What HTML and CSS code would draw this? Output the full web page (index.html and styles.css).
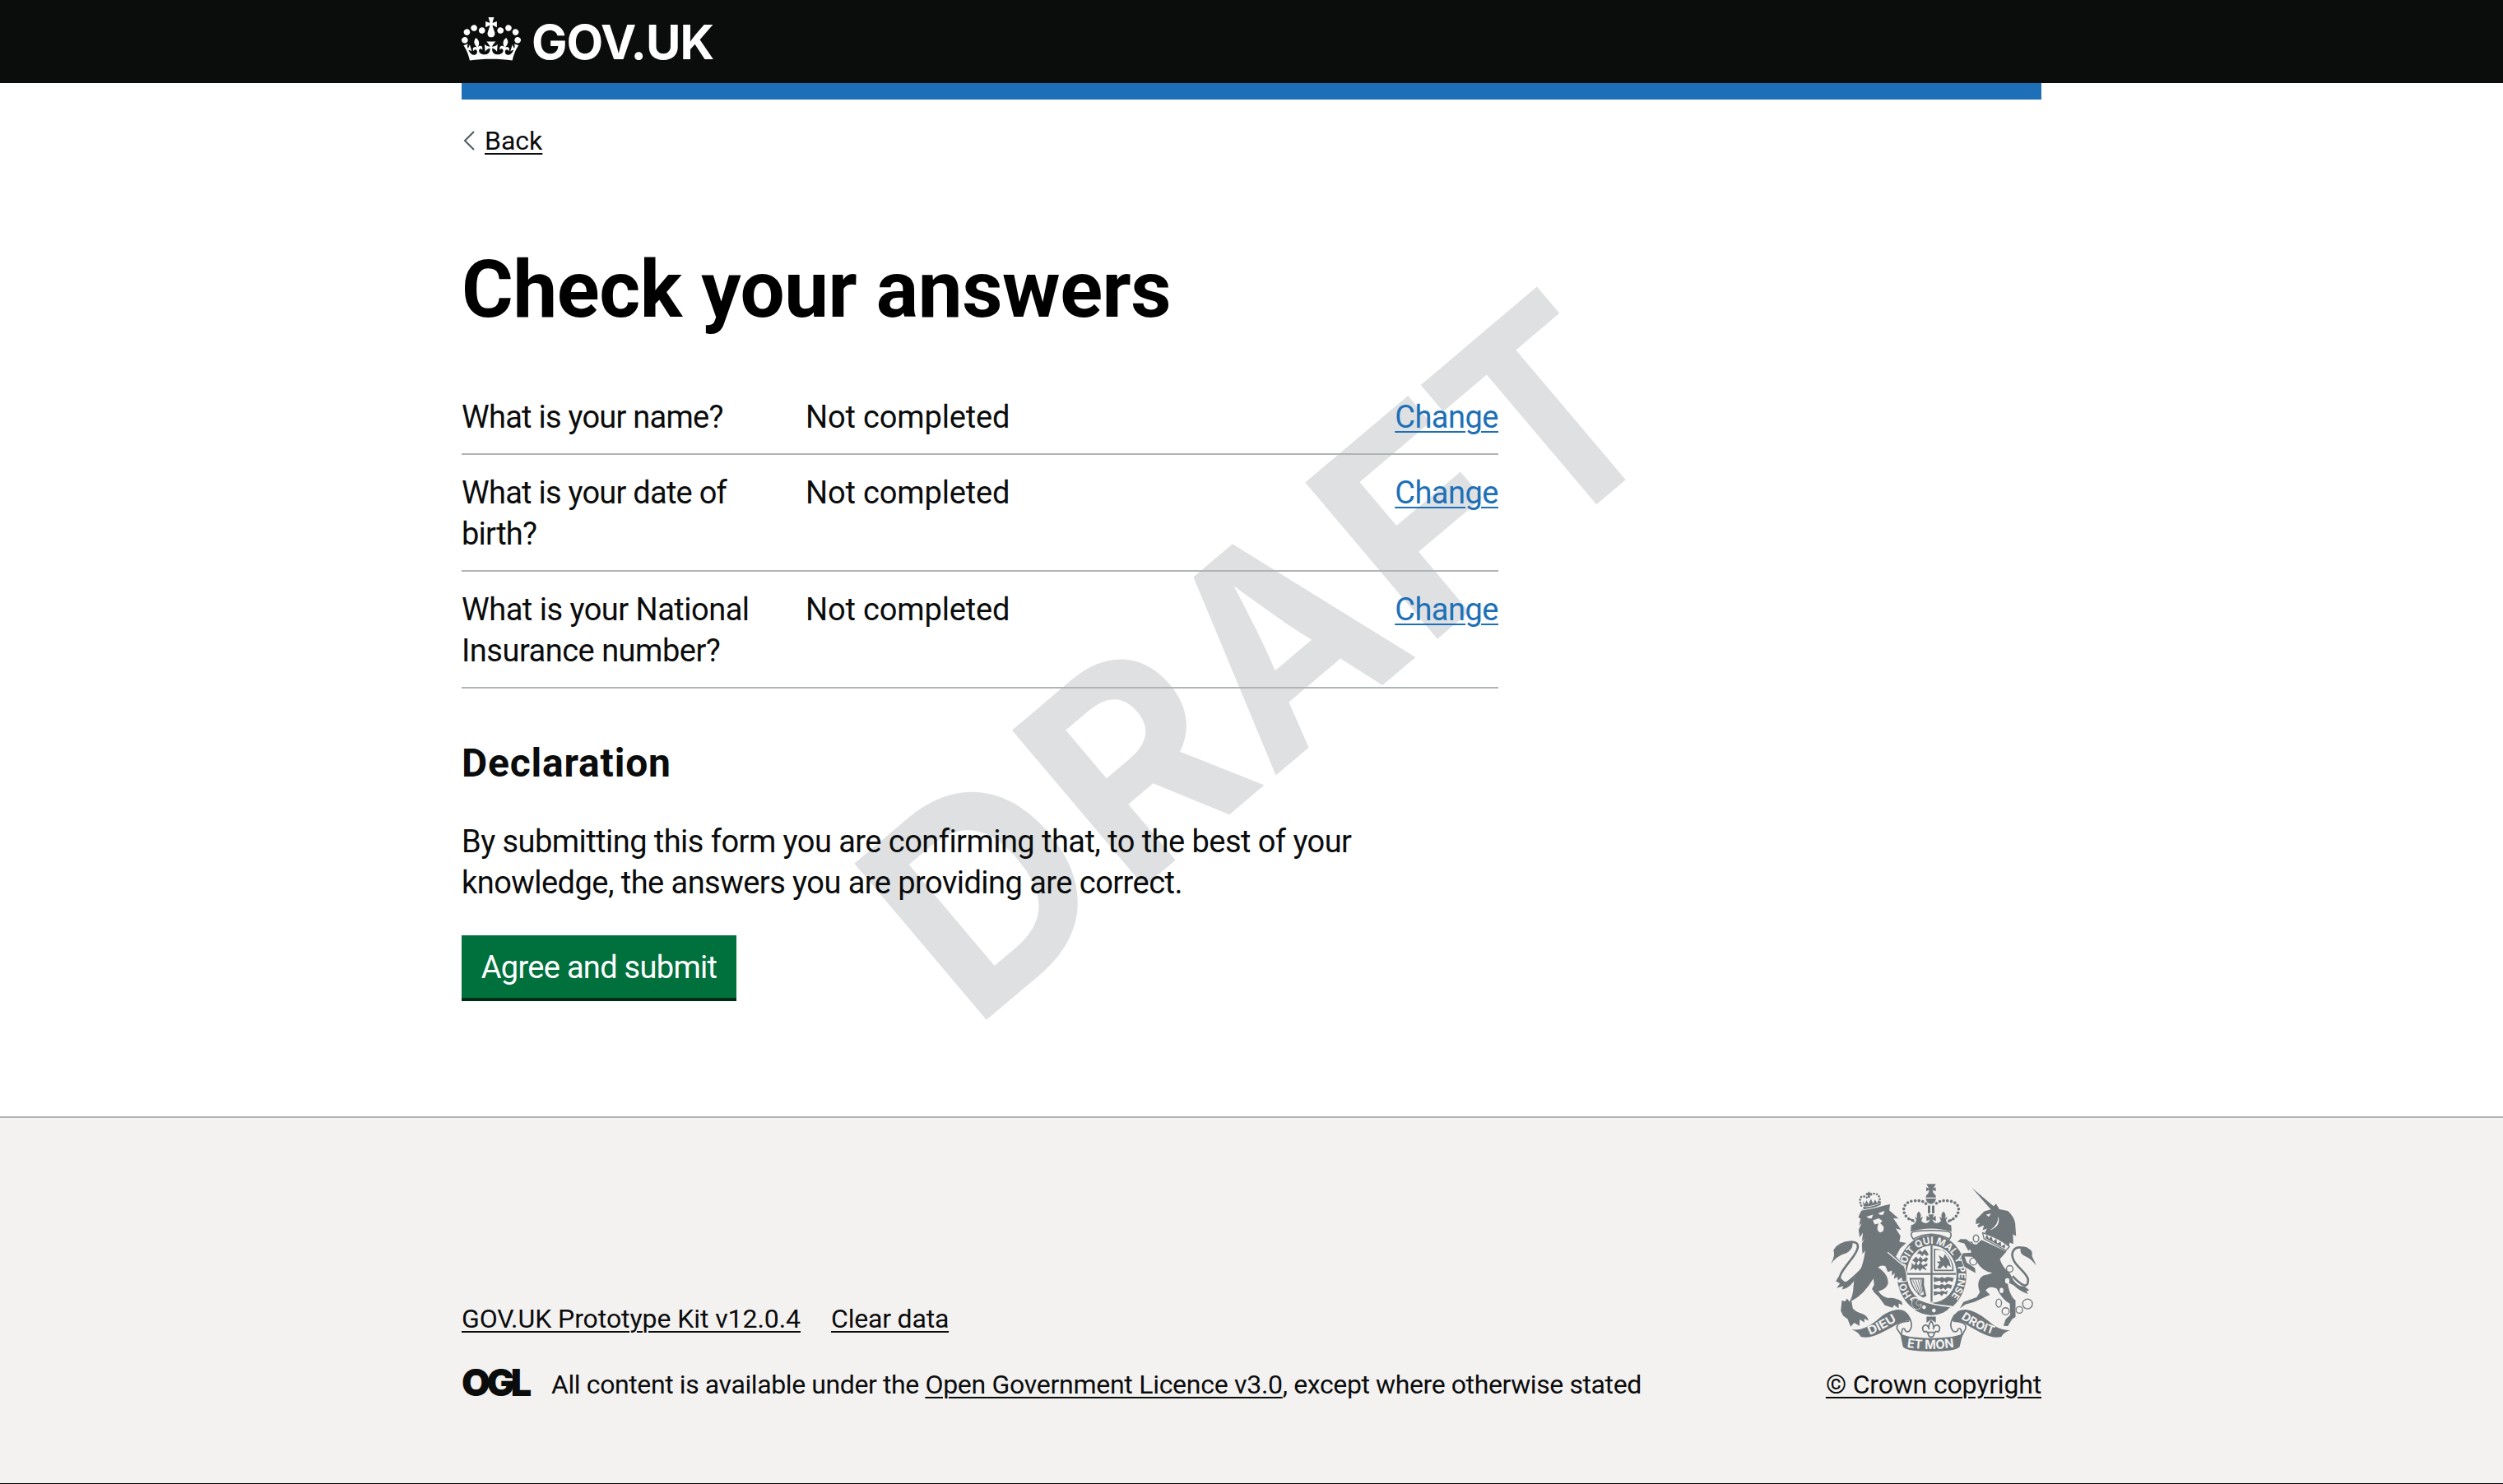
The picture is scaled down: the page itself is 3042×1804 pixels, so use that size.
FILE: index.html
```html
<!DOCTYPE html>
<html lang="en">
<head>
<meta charset="utf-8">
<title>Check your answers - GOV.UK</title>
<link rel="stylesheet" href="styles.css">
</head>
<body>
<header class="header">
  <div class="container header-inner">
    <svg class="crown" viewBox="0 0 132 97" aria-hidden="true"><path fill="currentColor" fill-rule="evenodd" d="M25 30.2c3.5 1.5 7.7-.2 9.1-3.7 1.5-3.6-.2-7.8-3.9-9.2-3.6-1.4-7.6.3-9.1 3.9-1.4 3.5.3 7.5 3.9 9zM9 39.5c3.6 1.5 7.8-.2 9.2-3.7 1.5-3.6-.2-7.8-3.9-9.1-3.6-1.5-7.6.2-9.1 3.8-1.4 3.5.3 7.5 3.8 9zM4.4 57.2c3.5 1.5 7.7-.2 9.1-3.8 1.5-3.6-.2-7.7-3.9-9.1-3.5-1.5-7.6.3-9.1 3.8-1.4 3.5.3 7.6 3.9 9.1zm38.3-21.4c3.5 1.5 7.7-.2 9.1-3.8 1.5-3.6-.2-7.7-3.9-9.1-3.6-1.5-7.6.3-9.1 3.8-1.3 3.6.4 7.7 3.9 9.1zm64.4-5.6c-3.6 1.5-7.8-.2-9.1-3.7-1.5-3.6.2-7.8 3.8-9.2 3.6-1.4 7.7.3 9.2 3.9 1.3 3.5-.4 7.5-3.9 9zm15.9 9.3c-3.6 1.5-7.7-.2-9.1-3.7-1.5-3.6.2-7.8 3.7-9.1 3.6-1.5 7.7.2 9.2 3.8 1.5 3.5-.3 7.5-3.8 9zm4.7 17.7c-3.6 1.5-7.8-.2-9.2-3.8-1.5-3.6.2-7.7 3.9-9.1 3.6-1.5 7.7.3 9.2 3.8 1.3 3.5-.4 7.6-3.9 9.1zM89.3 35.8c-3.6 1.5-7.8-.2-9.2-3.8-1.4-3.6.2-7.7 3.9-9.1 3.6-1.5 7.7.3 9.2 3.8 1.4 3.6-.3 7.7-3.9 9.1zM69.7 17.7l8.9 4.7V9.3l-8.9 2.8c-.2-.3-.5-.6-.9-.9L72.4 0H59.6l3.5 11.2c-.3.3-.6.5-.9.9l-8.8-2.8v13.1l8.8-4.7c.3.3.6.7.9.9l-5 15.4v.1c-.2.8-.4 1.6-.4 2.4 0 4.1 3.1 7.5 7 8.1h.2c.3 0 .7.1 1 .1.4 0 .7 0 1-.1h.2c4-.6 7.1-4.1 7.1-8.1 0-.8-.1-1.7-.4-2.4V34l-5.1-15.4c.4-.2.7-.6 1-.9zM66 92.8c16.9 0 32.8 1.1 47.1 3.2 4-16.9 8.9-26.7 14-33.5l-9.6-3.4c1 4.9 1.1 7.2 0 10.2-1.5-1.4-3-4.3-4.2-8.7L108.6 76c2.8-2 5-3.2 7.5-3.3-4.4 9.4-10 11.9-13.6 11.2-4.3-.8-6.3-4.6-5.6-7.9 1-4.7 5.7-5.9 8-.5 4.3-8.7-3-11.4-7.6-8.8 7.1-7.2 7.9-13.5 2.1-21.1-8 6.1-8.1 12.3-4.5 20.8-4.7-5.4-12.1-2.5-9.5 6.2 3.4-5.2 7.9-2 7.2 3.1-.6 4.3-6.4 7.8-13.5 7.2-10.3-.9-10.9-8-11.2-13.8 2.5-.5 7.1 1.8 11 7.3L80.2 60c-4.1 4.4-8 5.3-12.3 5.4 1.4-4.4 8-11.6 8-11.6H55.5s6.4 7.2 7.9 11.6c-4.2-.1-8-1-12.3-5.4l1.4 16.4c3.9-5.5 8.5-7.7 10.9-7.3-.3 5.8-.9 12.8-11.1 13.8-7.2.6-12.9-2.9-13.5-7.2-.7-5 3.8-8.3 7.1-3.1 2.7-8.7-4.6-11.6-9.4-6.2 3.7-8.5 3.6-14.7-4.6-20.8-5.8 7.6-5 13.9 2.2 21.1-4.7-2.6-11.9.1-7.7 8.8 2.3-5.5 7.1-4.2 8.1.5.7 3.3-1.3 7.1-5.7 7.9-3.5.7-9-1.8-13.5-11.2 2.5.1 4.7 1.3 7.5 3.3l-4.7-15.4c-1.2 4.4-2.7 7.2-4.3 8.7-1.1-3-.9-5.3 0-10.2l-9.5 3.4c5 6.9 9.9 16.7 14 33.5 14.8-2.1 30.8-3.2 47.7-3.2z"/></svg>
    <span class="logotype">GOV.UK</span>
  </div>
</header>

<div class="container page">
  <div class="blue-bar"></div>
  <div class="watermark" aria-hidden="true"><span class="wm-d">D</span><span class="wm-r">R</span><span class="wm-a">A</span><span class="wm-f">F</span><span class="wm-t">T</span></div>

  <a class="back">
    <svg class="chevron" viewBox="0 0 14 24" aria-hidden="true"><path d="M13 1 2 12l11 11" fill="none" stroke="#505a5f" stroke-width="2"/></svg>
    <span class="link back-text">Back</span>
  </a>

  <main class="main">
    <h1 class="title">Check your answers</h1>
    <dl class="summary">
      <div class="row">
        <dt class="key">What is your name?</dt>
        <dd class="value">Not completed</dd>
        <dd class="action"><a class="link change">Change</a></dd>
      </div>
      <div class="row">
        <dt class="key">What is your date of birth?</dt>
        <dd class="value">Not completed</dd>
        <dd class="action"><a class="link change">Change</a></dd>
      </div>
      <div class="row">
        <dt class="key key-wide">What is your National Insurance number?</dt>
        <dd class="value">Not completed</dd>
        <dd class="action"><a class="link change">Change</a></dd>
      </div>
    </dl>
    <h2 class="subtitle">Declaration</h2>
    <p class="statement">By submitting this form you are confirming that, to the best of your knowledge, the answers you are providing are correct.</p>
    <button class="button">Agree and submit</button>
  </main>
</div>

<footer class="footer">
  <div class="container footer-inner">
    <div class="meta">
      <div class="meta-links">
        <a class="link kit">GOV.UK Prototype Kit v12.0.4</a>
        <a class="link clear">Clear data</a>
      </div>
      <div class="licence">
        <span class="ogl">OGL</span>
        <span class="licence-text">All content is available under the <a class="link licence-link">Open Government Licence v3.0</a>, except where otherwise stated</span>
      </div>
    </div>
    <div class="copyright">
      <svg class="arms" viewBox="75 56 750 613" aria-hidden="true">
        <defs>
          <path id="garter" d="M372 467A98 113 0 1 1 507 474"/>
          <path id="dieu" d="M217 609Q272 586 322 552"/>
          <path id="etmon" d="M352 653Q440 667 532 652"/>
          <path id="droit" d="M549 548Q606 588 676 609"/>
        </defs>
        <g fill="#6f777b">
          <!-- garter and shield -->
          <ellipse cx="443" cy="388" rx="127" ry="146"/>
          <ellipse cx="443" cy="386" rx="91" ry="105" fill="#f3f2f1"/>
          <path d="M439 282h7v205h-7zM354 382h178v7H354z"/>
          <path d="M363 374q10-14 6-30l10 10 6-12 8 12 8-11 10 11 16-8v10l-10 3 8 14-17-8-8 10-8-11-8 9-7-9zM372 336l14-14 8 10 8-10 8 11 14-9 6 7-8 11-10-4-8 8-8-9-8 9zM388 312l12-14 8 8 10-11 8 9 6 12-8 4-8-8-8 9-8-9z"/>
          <path d="M451 293v82h72V360q-8-36-38-62zm5 5h26q28 20 36 60v12h-62z" fill-rule="evenodd"/>
          <path d="M463 364l8-15-10-8 15-2-8-22 17 11 6-15 16 23 6 25-12-8-4 13-12-12-10 12z"/>
          <path d="M361 400h54v27l9 39-13 6q-38-19-50-72zm7 6q10 41 36 58l11-4-8-34v-20z" fill-rule="evenodd"/>
          <path d="M374 408l24 53M384 408l19 52M394 408l13 47M403 408l8 45" stroke="#6f777b" stroke-width="3"/>
          <path d="M450 396l20 5 10-5 10 5 10-5 24 4-5 14-14-4-8 9-8-8-8 8-10-9-20 6zM450 423l20 4 10-5 10 5 10-5 18 4-5 14-12-5-8 9-8-8-8 7-8-7-18 6zM450 449l20 2 12-4 10 4 10-5-4 14-10-3-9 9-8-8-20 7z"/>
          <text class="motto" font-size="36"><textPath href="#garter" startOffset="3" textLength="498" lengthAdjust="spacingAndGlyphs">HONI SOIT QUI MAL Y PENSE</textPath></text>
          <path d="M366 478Q384 465 400 480Q445 500 515 505Q490 538 441 539Q400 535 378 518Q394 502 366 478Z" stroke="#f3f2f1" stroke-width="5"/>
          <circle cx="415" cy="507" r="7" fill="#f3f2f1"/><circle cx="451" cy="519" r="7" fill="#f3f2f1"/>
          <path d="M372 482q14-14 24-1-14 4-8 16 10 8 17-3 1 23-20 21-20-10-13-33z" stroke="#f3f2f1" stroke-width="2"/>
          <!-- lion -->
          <path stroke="#f3f2f1" stroke-width="6" paint-order="stroke" d="M175 178L188 150Q230 145 272 134L291 131L288 153L322 183L303 182L331 224L312 220L329 247L325 268L350 272L328 292L312 322L334 345Q353 375 350 411L337 412L333 398L320 409L318 396L305 403L308 382L297 392L298 373L283 378L274 357Q258 352 247 362Q284 385 284 419Q280 440 248 449Q262 468 283 474Q310 470 334 487L336 499L323 493L322 511L306 499L300 509L272 500L250 470L232 452L225 440L233 425L230 402Q195 462 150 484L155 512Q166 524 186 530Q208 536 213 556L197 549L197 562L180 552L179 575L160 564L147 578L136 550L120 538L111 520L115 482L127 486L134 475L143 487Q157 462 157 432Q157 398 185 364Q195 340 200 300L190 312L188 275L198 255L188 268L192 235L180 252L176 224L187 200L178 208L183 184Z"/>
          <path d="M282 306L338 354" stroke="#f3f2f1" stroke-width="4"/>
          <path d="M75 348Q92 316 84 300Q100 267 152 264Q161 292 132 309Q101 316 75 348Z"/>
          <path d="M148 269C190 266 174 303 142 341C113 378 100 397 111 415C130 430 148 405 190 368" fill="none" stroke="#6f777b" stroke-width="8"/>
          <path d="M103 395L93 412L108 420L96 437L120 430L116 442Q145 440 170 395L130 418Z"/>
          <path d="M192 141Q225 142 255 127L258 133Q222 150 195 150ZM203 90h8v-5h6v5h8v7h-8v10h-7v-9h-7zM191 120l8 10 6-14 7 15 9-20 8 17 7-14 7 12 9-12 1 12q-30 14-58 13z"/>
          <path d="M176 176Q230 168 288 150" fill="none" stroke="#f3f2f1" stroke-width="3" transform="translate(4 -22)"/>
          <path d="M186 136C172 103 191 94 210 109C219 87 256 81 254 124" fill="none" stroke="#6f777b" stroke-width="8" stroke-linecap="round" stroke-dasharray="0 11"/>
          <!-- crown -->
          <path d="M424 57h34l-9 16 9-4v14l-12-4 4 14h-20l4-14-11 4V69l10 4zM421 106Q424 89 441 89Q457 89 459 106ZM421 110H459Q455 129 440 130Q425 128 421 110ZM429 136h9v28h-9zM444 136h9v28h-9z"/>
          <path d="M360 183q8 14 21 14l-3-11-12-2zM522 184q-8 14-21 14l3-11 12-2zM368 207Q382 206 387 190L381 176L391 182Q384 170 396 157Q408 170 401 182L411 176L405 192Q418 206 432 196L437 186L424 193V173L435 179L431 168H451L447 179L458 173V193L445 186L450 196Q464 206 477 192L471 176L481 182Q474 170 486 157Q498 170 491 182L501 176L495 190Q500 206 514 207L516 231Q440 209 366 231Z"/>
          <path d="M359 184C333 166 333 125 373 119Q412 114 424 131M522 184C548 166 552 125 508 119Q470 114 457 131" fill="none" stroke="#6f777b" stroke-width="11" stroke-linecap="round" stroke-dasharray="0 14"/>
          <path d="M376 258Q356 232 386 229Q440 224 496 229Q524 232 508 258Q440 222 376 258Z" fill="#f3f2f1" stroke="#6f777b" stroke-width="5"/>
          <!-- unicorn -->
          <path d="M590 71L669 138L678 129L690 149L721 155Q744 175 748 201L751 247L740 241L741 276L728 271L725 284Q695 257 652 247L637 235L645 220L629 226L634 208L614 216L610 209L619 200L604 203L605 187L635 157L659 150Z"/>
          <path stroke="#f3f2f1" stroke-width="5" paint-order="stroke" d="M625 261L716 304L692 331Q700 360 728 383L754 432L720 416Q724 450 740 474L749 482V543L737 550L721 576L705 575L713 551L730 535L728 494Q700 478 680 438Q653 426 640 446L656 462L600 487L566 497L546 511L559 488L607 471L619 452Q602 410 632 391Q653 386 665 381Q628 378 607 340L592 323L563 322L571 344L601 364L603 382L583 371L562 359L550 324L557 310L588 308L583 295L577 301L562 274L537 268L548 258L570 259L587 274L606 278Z"/>
          <path d="M629 235L634 257L714 300L727 286Q690 254 629 235Z" fill="#f3f2f1" stroke="#6f777b" stroke-width="4"/>
          <path d="M638 254L645 242L652 257L661 248L667 266L679 257L682 274L695 268L697 284L711 277L710 293Z"/>
          <path d="M825 354Q804 329 791 324Q760 313 769 288Q785 281 801 296Q813 303 809 320Z"/>
          <path d="M779 291C744 281 727 307 744 339C760 366 788 380 795 405C796 438 777 435 738 393" fill="none" stroke="#6f777b" stroke-width="8"/>
          <path d="M741 409Q762 434 781 430L800 445L789 448L795 459Q760 447 741 425Z"/>
          <g fill="none" stroke="#6f777b" stroke-width="4"><ellipse cx="605" cy="256" rx="10" ry="13"/><ellipse cx="585" cy="280" rx="8" ry="11"/><circle cx="595" cy="340" r="13"/><circle cx="728" cy="367" r="12"/><ellipse cx="688" cy="492" rx="10" ry="15"/><circle cx="713" cy="522" r="13"/><circle cx="763" cy="517" r="12"/><circle cx="793" cy="495" r="18"/></g>
          <g fill="#f3f2f1"><ellipse cx="719" cy="411" rx="8" ry="10"/><ellipse cx="698" cy="446" rx="7" ry="10"/><path d="M205 176l24-7-5 13q-10 4-19-6zM247 164l24-9-5 14q-10 4-19-5zM228 190l22-8 13 10-8 8 12 12q4 20-12 22-12-5-10-20l4-13-14 4zM642 169l18-4-9 12zM656 225q30-15 30-50 12 42-42 54z"/></g>
          <!-- fleur-de-lis -->
          <path d="M424 541h34v23l-17-12-17 12z"/>
          <path d="M441 557q13 18 7 31q5-19 17-15q14 8 2 24l-9-2-6 9q-2 12-11 12q-9 0-11-12l-6-9-9 2q-12-16 2-24q12-4 17 15q-6-13 7-31zM426 599h30" fill="none" stroke="#6f777b" stroke-width="5"/>
          <!-- scroll -->
          <path d="M151 588Q190 596 240 557Q278 520 318 516Q350 515 360 541Q374 562 362 556Q342 555 320 567Q300 580 260 600Q210 625 183 614Q180 601 151 588Z"/>
          <path d="M731 590Q692 596 650 557Q605 520 568 516Q533 515 525 541L514 558Q542 555 564 567Q585 580 622 600Q672 625 699 614Q702 601 731 590Z"/>
          <path d="M354 533Q381 573 360 595Q347 600 344 586Q334 580 333 605M528 533Q501 573 522 595Q537 600 540 586Q552 580 552 605M360 558Q313 560 316 585L338 619M522 558Q572 560 567 585L549 619" fill="none" stroke="#6f777b" stroke-width="5"/>
          <path d="M328 602Q345 618 441 620Q535 618 557 602L545 652Q530 669 441 669Q352 669 338 652Z"/>
        </g>
        <g class="motto">
          <text font-size="44"><textPath href="#dieu" textLength="112" lengthAdjust="spacingAndGlyphs">DIEU</textPath></text>
          <text font-size="46"><textPath href="#etmon" textLength="174" lengthAdjust="spacingAndGlyphs">ET MON</textPath></text>
          <text font-size="42"><textPath href="#droit" textLength="132" lengthAdjust="spacingAndGlyphs">DROIT</textPath></text>
        </g>
      </svg>
      <a class="link crown-copyright">© Crown copyright</a>
    </div>
  </div>
</footer>
</body>
</html>
```
FILE: styles.css
```css
* { box-sizing: border-box; }
body {
  margin: 0;
  min-height: 1804px;
  display: flex;
  flex-direction: column;
  background: #fff;
  color: #0b0c0c;
  font-family: Roboto, "Liberation Sans", sans-serif;
  font-size: 38px;
  line-height: 50px;
}
.container { width: 1920px; margin: 0 auto; }
.link {
  text-decoration: underline;
  text-decoration-thickness: 2px;
  text-underline-offset: 4px;
}

.header { height: 101px; background: #0b0c0c; color: #fff; }
.header-inner { display: flex; align-items: flex-start; padding-top: 21px; }
.crown { width: 72px; height: 53px; flex: none; }
.logotype {
  margin-left: 13px;
  font: 700 58px/60px Inter, "Liberation Sans", sans-serif;
  letter-spacing: -1px;
}

.page { position: relative; isolation: isolate; height: 1256px; }
.blue-bar { height: 20px; background: #1d70b8; }
.watermark {
  position: absolute;
  z-index: -1;
  left: 621px;
  top: 858px;
  display: flex;
  font: 700 342px/342px Inter, "Liberation Sans", sans-serif;
  white-space: nowrap;
  color: #dee0e2;
  transform-origin: 0 295px;
  transform: rotate(-40.2deg);
}
.watermark span { transform-origin: 0 0; }
.wm-d { width: 251px; transform: scaleX(0.98); }
.wm-r { width: 224px; transform: scaleX(0.98); }
.wm-a { width: 242px; transform: scaleX(0.93); }
.wm-f { width: 195px; }
.wm-t { width: 210px; transform: scaleX(0.91); }

.back {
  display: flex;
  align-items: center;
  width: max-content;
  margin-top: 30px;
  font-size: 32px;
  line-height: 40px;
}
.chevron { width: 14px; height: 24px; margin: 0 12px 0 2px; }

.main { width: 1260px; padding-top: 111px; }
.title {
  margin: 0 0 56px;
  font-size: 96px;
  line-height: 100px;
  letter-spacing: -0.4px;
  color: #000;
}
.summary { margin: 0; }
.row {
  display: grid;
  grid-template-columns: 378px 1fr auto;
  column-gap: 40px;
  padding: 21px 0 19px;
  border-bottom: 2px solid #b1b4b6;
}
.row:first-child { padding-top: 24px; }
.key { letter-spacing: -0.75px; }
.key-wide { letter-spacing: -0.5px; }
.value { margin: 0; letter-spacing: -0.15px; }
.action { margin: 0; }
.change { color: #1d70b8; letter-spacing: -0.5px; }

.subtitle {
  margin: 61px 0 40px;
  font-size: 48px;
  line-height: 60px;
  letter-spacing: 0.8px;
}
.statement { width: 1200px; margin: 0 0 39px; letter-spacing: -0.54px; }
.button {
  display: block;
  width: 334px;
  height: 76px;
  padding: 2px 0 0;
  border: 0;
  background: #00703c;
  box-shadow: 0 4px 0 #002d18;
  color: #fff;
  font: inherit;
  letter-spacing: -0.7px;
}

.footer {
  flex: 1;
  border-top: 2px solid #b1b4b6;
  border-bottom: 1px solid #000;
  background: #f3f2f1;
  font-size: 32px;
  line-height: 40px;
}
.footer-inner { display: flex; justify-content: space-between; align-items: flex-end; padding-top: 80px; }
.meta-links { display: flex; gap: 37px; margin-bottom: 40px; }
.kit { letter-spacing: -0.07px; }
.clear { letter-spacing: -0.2px; }
.licence { display: flex; align-items: center; }
.ogl {
  width: 109px;
  margin-top: -4px;
  font: 900 45px/40px Inter, "Liberation Sans", sans-serif;
  letter-spacing: -4.5px;
}
.licence-text { letter-spacing: -0.4px; white-space: nowrap; }
.licence-link { letter-spacing: -0.28px; }
.copyright { display: flex; flex-direction: column; align-items: flex-end; }
.arms { width: 250px; height: 204px; margin: 0 6px 20px 0; }
.motto { fill: #f3f2f1; font-family: Inter, sans-serif; font-weight: 700; }
.crown-copyright { letter-spacing: -0.17px; }
```
